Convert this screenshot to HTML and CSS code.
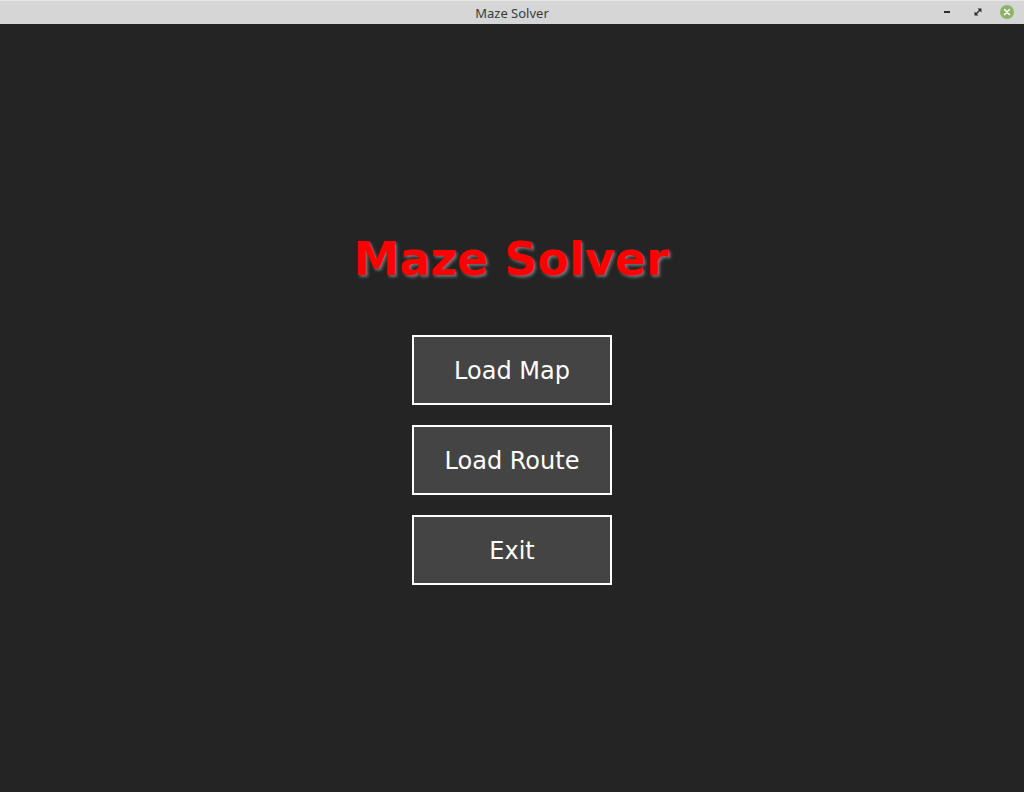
FILE: index.html
```html
<!DOCTYPE html>
<html>
<head>
<meta charset="utf-8">
<title>Maze Solver</title>
<link rel="stylesheet" href="styles.css">
</head>
<body>
<div class="window">
  <header class="titlebar">
    <span class="titlebar-title">Maze Solver</span>
    <div class="titlebar-controls">
      <span class="ctl ctl-min"><svg width="10" height="10" viewBox="0 0 10 10"><rect x="1" y="4" width="6" height="2" fill="#2e2e2e"/></svg></span>
      <span class="ctl ctl-max"><svg width="10" height="10" viewBox="0 0 10 10"><path d="M4.5 1.5h4v4z M1.5 4.5v4h4z" fill="#2e2e2e"/><path d="M3 7 L7 3" stroke="#2e2e2e" stroke-width="1.4"/></svg></span>
      <span class="ctl ctl-close"><svg width="14" height="14" viewBox="0 0 14 14"><circle cx="7" cy="7" r="7" fill="#8db369"/><path d="M4.5 4.5 L9.5 9.5 M9.5 4.5 L4.5 9.5" stroke="#ffffff" stroke-width="1.6" stroke-linecap="round"/></svg></span>
    </div>
  </header>
  <main class="content">
    <h1 class="app-title">Maze Solver</h1>
    <div class="menu">
      <button class="menu-btn">Load Map</button>
      <button class="menu-btn">Load Route</button>
      <button class="menu-btn">Exit</button>
    </div>
  </main>
</div>
</body>
</html>
```

FILE: styles.css
```css
html, body {
  margin: 0;
  padding: 0;
  height: 100%;
  background: #242424;
}
.window {
  display: flex;
  flex-direction: column;
  height: 792px;
}
.titlebar {
  height: 24px;
  box-sizing: border-box;
  background: #d6d6d6;
  border-top: 1px solid #e8e8e8;
  display: flex;
  align-items: center;
  justify-content: center;
  position: relative;
  font-family: "Noto Sans", "DejaVu Sans", sans-serif;
  font-size: 13px;
  color: #3a3a3a;
}
.titlebar-title {
  line-height: 22px;
}
.titlebar-controls {
  position: absolute;
  right: 10px;
  top: 4px;
  display: flex;
  align-items: center;
  gap: 0;
}
.ctl {
  display: flex;
  align-items: center;
  justify-content: center;
}
.ctl-min { width: 10px; margin-right: 20px; }
.ctl-max { width: 10px; margin-right: 17px; }
.ctl-close { width: 14px; }
.content {
  flex: 1;
  display: flex;
  flex-direction: column;
  align-items: center;
  padding-top: 207px;
}
.app-title {
  margin: 0 0 0 -2px;
  font-family: "DejaVu Sans", sans-serif;
  font-weight: bold;
  font-size: 46px;
  line-height: 56px;
  color: #ff0000;
  text-shadow: 2px 2px 3px rgba(160, 175, 175, 0.55);
}
.menu {
  margin-top: 48px;
  display: flex;
  flex-direction: column;
  gap: 20px;
}
.menu-btn {
  width: 200px;
  height: 70px;
  box-sizing: border-box;
  border: 2px solid #ffffff;
  background: #444444;
  color: #ffffff;
  font-family: "DejaVu Sans", sans-serif;
  font-size: 24px;
  padding: 2px 0 0 0;
  margin: 0;
}
```
